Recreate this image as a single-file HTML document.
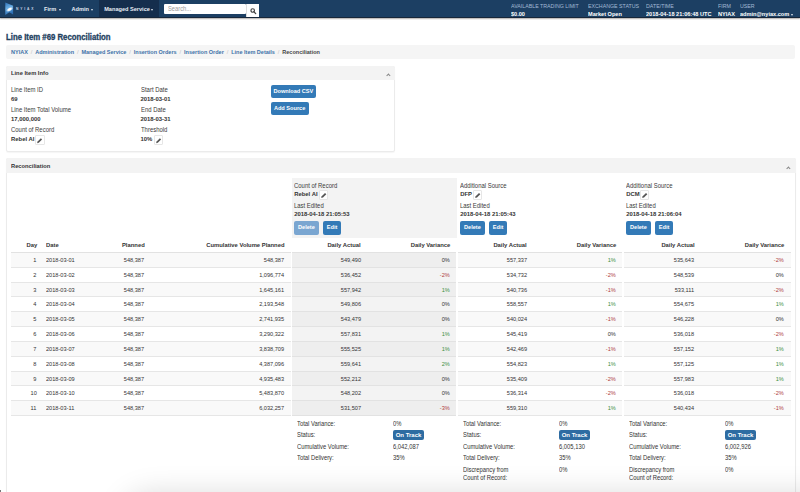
<!DOCTYPE html>
<html><head><meta charset="utf-8">
<style>
*{box-sizing:border-box;margin:0;padding:0}
html,body{width:800px;height:492px;overflow:hidden;background:#fff}
.wrap{position:absolute;left:0;top:0;width:800px;height:492px}
body{font-family:"Liberation Sans",sans-serif;color:#333;position:relative}
.a{position:absolute;white-space:nowrap;line-height:1}
.nav{position:absolute;left:0;top:0;width:800px;height:18px;background:#1c3f63;border-bottom:1px solid #17273a;box-shadow:0 1px 1.2px rgba(40,30,20,.35)}
.nl{color:#e6edf5;font-weight:bold;font-size:5.6px}
.lab{color:#a3bad6;font-size:6px;transform:scaleX(.88);transform-origin:0 0}
.val{color:#fff;font-weight:bold;font-size:6px;transform:scaleX(.93);transform-origin:0 0}
.title{color:#23415f;font-weight:bold;font-size:8.2px;transform:scaleX(0.95);transform-origin:0 0;-webkit-text-stroke:0.3px #23415f}
.bc{position:absolute;left:6px;top:45px;width:789px;height:14px;background:#f5f5f5;border-radius:2px}
.bcl{color:#3d72a8;font-size:5.5px;font-weight:bold}
.bcs{color:#c4c4c4;font-size:5.9px;padding:0 2.9px}
.panel{position:absolute;border:1px solid #ebebeb;border-radius:2px;background:#fff;box-shadow:0 1px 1px rgba(0,0,0,.04)}
.ph{position:absolute;left:-1px;top:-1px;right:-1px;background:#f3f3f3;border-radius:2px 2px 0 0}
.pht{color:#333;font-weight:bold;font-size:6.2px;transform:scaleX(.93);transform-origin:0 0}
.l{color:#3a3a3a;font-size:6.6px;transform:scaleX(.9);transform-origin:0 0}
.v{color:#333;font-weight:bold;font-size:5.9px}
.pen{position:absolute;width:9.3px;height:10.1px;border:0.6px solid #e6e6e6;border-radius:1px;background:#fff}
.btn{position:absolute;background:#337ab7;border-radius:2px;color:#fff;font-weight:bold;font-size:5.6px;text-align:center}
.th{font-weight:bold;font-size:6.1px;color:#333;transform:scaleX(.96);transform-origin:0 0}
.td{font-size:6.1px;color:#333;transform:scaleX(.92);transform-origin:0 0}
.pencil{position:absolute}
.sl{font-size:6.6px;color:#333;transform:scaleX(.885);transform-origin:0 0}
.caret{position:absolute;width:0;height:0;border-left:1.6px solid transparent;border-right:1.6px solid transparent;border-top:2px solid #dfe7f0}
.chev{position:absolute;width:2.8px;height:2.8px;border-left:0.9px solid #888;border-top:0.9px solid #888;transform:rotate(45deg)}
</style></head><body><div class="wrap">
<div class="nav"></div>
<!-- logo -->
<svg class="a" style="left:5px;top:1.5px" width="9" height="13" viewBox="0 0 9 13">
<defs><linearGradient id="lg" x1="0" y1="0" x2="0.3" y2="1"><stop offset="0" stop-color="#2f72b8"/><stop offset="0.5" stop-color="#6aaee3"/><stop offset="1" stop-color="#2c6db3"/></linearGradient>
<radialGradient id="rg"><stop offset="0.4" stop-color="#fff"/><stop offset="1" stop-color="#fff" stop-opacity="0"/></radialGradient></defs>
<path d="M0.3 0.5 L8.1 3.7 L8.1 12.6 L4.4 10.2 L0.3 13 Z" fill="url(#lg)"/>
<ellipse cx="4.6" cy="7.4" rx="3.9" ry="2" transform="rotate(-28 4.6 7.4)" fill="url(#rg)"/>
</svg>
<div class="a" style="left:16px;top:7.9px;color:#c9d5e3;font-size:3.3px;font-weight:bold;letter-spacing:1.85px">NYIAX</div>
<div class="a" style="left:98.7px;top:0;width:60.2px;height:17px;background:#152e4d"></div>
<div class="a nl" style="left:44px;top:7px">Firm</div><div class="caret" style="left:58.8px;top:9.2px"></div>
<div class="a nl" style="left:71.5px;top:7px">Admin</div><div class="caret" style="left:91px;top:9.2px"></div>
<div class="a nl" style="left:104.2px;top:7px">Managed Service</div><div class="caret" style="left:150.9px;top:9.2px"></div>
<div class="a" style="left:164px;top:4px;width:82px;height:10px;background:#fff;border-radius:1px"></div>
<div class="a" style="left:168px;top:5.9px;color:#9a9a9a;font-size:6.4px;transform:scaleX(.9);transform-origin:0 0">Search...</div>
<div class="a" style="left:245.5px;top:4px;width:13.5px;height:12.6px;background:#fff;border-left:1px solid #ddd"></div>
<svg class="a" style="left:249.5px;top:7.5px" width="7" height="7" viewBox="0 0 7 7"><circle cx="2.7" cy="2.5" r="1.75" fill="none" stroke="#444" stroke-width="1.2"/><path d="M3.9 3.8 L5.7 5.6" stroke="#444" stroke-width="1.3" stroke-linecap="round"/></svg>

<div class="a lab" style="left:511.3px;top:3.1px">AVAILABLE TRADING LIMIT</div>
<div class="a val" style="left:511.3px;top:10.9px">$0.00</div>
<div class="a lab" style="left:588px;top:3.1px">EXCHANGE STATUS</div>
<div class="a val" style="left:588px;top:10.9px">Market Open</div>
<div class="a lab" style="left:646px;top:3.1px">DATE/TIME</div>
<div class="a val" style="left:646px;top:10.9px">2018-04-18 21:06:48 UTC</div>
<div class="a lab" style="left:717.5px;top:3.1px">FIRM</div>
<div class="a val" style="left:717.5px;top:10.9px">NYIAX</div>
<div class="a lab" style="left:740px;top:3.1px">USER</div>
<div class="a val" style="left:740px;top:10.9px">admin@nyiax.com</div><div class="caret" style="left:791px;top:13.6px"></div>

<div class="a title" style="left:5.6px;top:34px">Line Item #69 Reconciliation</div>
<div class="bc"></div>
<div class="a" style="left:11px;top:49.6px;font-size:5.9px"><span class="bcl">NYIAX</span><span class="bcs">/</span><span class="bcl">Administration</span><span class="bcs">/</span><span class="bcl">Managed Service</span><span class="bcs">/</span><span class="bcl">Insertion Orders</span><span class="bcs">/</span><span class="bcl">Insertion Order</span><span class="bcs">/</span><span class="bcl">Line Item Details</span><span class="bcs">/</span><span class="bcl" style="color:#444">Reconciliation</span></div>

<!-- panel 1 -->
<div class="panel" style="left:5.5px;top:66.2px;width:389.5px;height:86.3px">
  <div class="ph" style="height:14.2px"></div>
</div>
<div class="a pht" style="left:11px;top:70.1px">Line Item Info</div>
<div class="chev" style="left:386.6px;top:73.8px"></div>

<div class="a l" style="left:11px;top:87.2px">Line Item ID</div>
<div class="a v" style="left:11px;top:97px">69</div>
<div class="a l" style="left:11px;top:107.1px">Line Item Total Volume</div>
<div class="a v" style="left:11px;top:117px">17,000,000</div>
<div class="a l" style="left:11px;top:127.2px">Count of Record</div>
<div class="a v" style="left:11px;top:137px">Rebel AI</div>
<div class="pen" style="left:35.3px;top:134.5px"><svg width="9" height="10" viewBox="0 0 9 10" style="position:absolute;left:-1px;top:-1px"><path d="M2.1 8.3 L2.6 6.5 L5.9 3.2 L7.1 4.4 L3.8 7.7 Z" fill="#555"/></svg></div>

<div class="a l" style="left:140.5px;top:87.2px">Start Date</div>
<div class="a v" style="left:140.5px;top:97px">2018-03-01</div>
<div class="a l" style="left:140.5px;top:107.1px">End Date</div>
<div class="a v" style="left:140.5px;top:117px">2018-03-31</div>
<div class="a l" style="left:140.5px;top:127.2px">Threshold</div>
<div class="a v" style="left:140.5px;top:137px">10%</div>
<div class="pen" style="left:154px;top:134.5px"><svg width="9" height="10" viewBox="0 0 9 10" style="position:absolute;left:-1px;top:-1px"><path d="M2.1 8.3 L2.6 6.5 L5.9 3.2 L7.1 4.4 L3.8 7.7 Z" fill="#555"/></svg></div>

<div class="btn" style="left:270.6px;top:85.1px;width:45.6px;height:13.4px;line-height:13.4px">Download CSV</div>
<div class="btn" style="left:270.6px;top:102px;width:38px;height:13.4px;line-height:13.4px">Add Source</div>

<!-- panel 2 -->
<div class="panel" style="left:5.5px;top:158px;width:790px;height:340px">
  <div class="ph" style="height:15px"></div>
</div>
<div class="a pht" style="left:11px;top:163.1px">Reconciliation</div>
<div class="chev" style="left:786.6px;top:166.6px"></div>
<div class="a" style="left:0;top:490px;width:1px;height:2px;background:#777"></div>

<div class="a" style="left:11.25px;top:252.2px;width:279.55px;height:1.5px;background:#e2e2e2"></div>
<div class="a" style="left:292px;top:252.2px;width:164.2px;height:1.5px;background:#e2e2e2"></div>
<div class="a" style="left:458px;top:252.2px;width:164.20000000000005px;height:1.5px;background:#e2e2e2"></div>
<div class="a" style="left:624px;top:252.2px;width:166.5px;height:1.5px;background:#e2e2e2"></div>
<div class="a" style="left:11.25px;top:253.0px;width:279.55px;height:14.83px;background:#f9f9f9;border-bottom:1px solid #e6e6e6"></div>
<div class="a" style="left:292px;top:253.0px;width:164.2px;height:14.83px;background:#eeeeee;border-bottom:1px solid #e2e2e2"></div>
<div class="a" style="left:458px;top:253.0px;width:164.20000000000005px;height:14.83px;background:#f9f9f9;border-bottom:1px solid #e6e6e6"></div>
<div class="a" style="left:624px;top:253.0px;width:166.5px;height:14.83px;background:#f9f9f9;border-bottom:1px solid #e6e6e6"></div>
<div class="a" style="left:11.25px;top:267.83px;width:279.55px;height:14.83px;background:#ffffff;border-bottom:1px solid #e6e6e6"></div>
<div class="a" style="left:292px;top:267.83px;width:164.2px;height:14.83px;background:#f3f3f3;border-bottom:1px solid #e2e2e2"></div>
<div class="a" style="left:458px;top:267.83px;width:164.20000000000005px;height:14.83px;background:#ffffff;border-bottom:1px solid #e6e6e6"></div>
<div class="a" style="left:624px;top:267.83px;width:166.5px;height:14.83px;background:#ffffff;border-bottom:1px solid #e6e6e6"></div>
<div class="a" style="left:11.25px;top:282.66px;width:279.55px;height:14.83px;background:#f9f9f9;border-bottom:1px solid #e6e6e6"></div>
<div class="a" style="left:292px;top:282.66px;width:164.2px;height:14.83px;background:#eeeeee;border-bottom:1px solid #e2e2e2"></div>
<div class="a" style="left:458px;top:282.66px;width:164.20000000000005px;height:14.83px;background:#f9f9f9;border-bottom:1px solid #e6e6e6"></div>
<div class="a" style="left:624px;top:282.66px;width:166.5px;height:14.83px;background:#f9f9f9;border-bottom:1px solid #e6e6e6"></div>
<div class="a" style="left:11.25px;top:297.49px;width:279.55px;height:14.83px;background:#ffffff;border-bottom:1px solid #e6e6e6"></div>
<div class="a" style="left:292px;top:297.49px;width:164.2px;height:14.83px;background:#f3f3f3;border-bottom:1px solid #e2e2e2"></div>
<div class="a" style="left:458px;top:297.49px;width:164.20000000000005px;height:14.83px;background:#ffffff;border-bottom:1px solid #e6e6e6"></div>
<div class="a" style="left:624px;top:297.49px;width:166.5px;height:14.83px;background:#ffffff;border-bottom:1px solid #e6e6e6"></div>
<div class="a" style="left:11.25px;top:312.32px;width:279.55px;height:14.83px;background:#f9f9f9;border-bottom:1px solid #e6e6e6"></div>
<div class="a" style="left:292px;top:312.32px;width:164.2px;height:14.83px;background:#eeeeee;border-bottom:1px solid #e2e2e2"></div>
<div class="a" style="left:458px;top:312.32px;width:164.20000000000005px;height:14.83px;background:#f9f9f9;border-bottom:1px solid #e6e6e6"></div>
<div class="a" style="left:624px;top:312.32px;width:166.5px;height:14.83px;background:#f9f9f9;border-bottom:1px solid #e6e6e6"></div>
<div class="a" style="left:11.25px;top:327.15px;width:279.55px;height:14.83px;background:#ffffff;border-bottom:1px solid #e6e6e6"></div>
<div class="a" style="left:292px;top:327.15px;width:164.2px;height:14.83px;background:#f3f3f3;border-bottom:1px solid #e2e2e2"></div>
<div class="a" style="left:458px;top:327.15px;width:164.20000000000005px;height:14.83px;background:#ffffff;border-bottom:1px solid #e6e6e6"></div>
<div class="a" style="left:624px;top:327.15px;width:166.5px;height:14.83px;background:#ffffff;border-bottom:1px solid #e6e6e6"></div>
<div class="a" style="left:11.25px;top:341.98px;width:279.55px;height:14.83px;background:#f9f9f9;border-bottom:1px solid #e6e6e6"></div>
<div class="a" style="left:292px;top:341.98px;width:164.2px;height:14.83px;background:#eeeeee;border-bottom:1px solid #e2e2e2"></div>
<div class="a" style="left:458px;top:341.98px;width:164.20000000000005px;height:14.83px;background:#f9f9f9;border-bottom:1px solid #e6e6e6"></div>
<div class="a" style="left:624px;top:341.98px;width:166.5px;height:14.83px;background:#f9f9f9;border-bottom:1px solid #e6e6e6"></div>
<div class="a" style="left:11.25px;top:356.81px;width:279.55px;height:14.83px;background:#ffffff;border-bottom:1px solid #e6e6e6"></div>
<div class="a" style="left:292px;top:356.81px;width:164.2px;height:14.83px;background:#f3f3f3;border-bottom:1px solid #e2e2e2"></div>
<div class="a" style="left:458px;top:356.81px;width:164.20000000000005px;height:14.83px;background:#ffffff;border-bottom:1px solid #e6e6e6"></div>
<div class="a" style="left:624px;top:356.81px;width:166.5px;height:14.83px;background:#ffffff;border-bottom:1px solid #e6e6e6"></div>
<div class="a" style="left:11.25px;top:371.64px;width:279.55px;height:14.83px;background:#f9f9f9;border-bottom:1px solid #e6e6e6"></div>
<div class="a" style="left:292px;top:371.64px;width:164.2px;height:14.83px;background:#eeeeee;border-bottom:1px solid #e2e2e2"></div>
<div class="a" style="left:458px;top:371.64px;width:164.20000000000005px;height:14.83px;background:#f9f9f9;border-bottom:1px solid #e6e6e6"></div>
<div class="a" style="left:624px;top:371.64px;width:166.5px;height:14.83px;background:#f9f9f9;border-bottom:1px solid #e6e6e6"></div>
<div class="a" style="left:11.25px;top:386.47px;width:279.55px;height:14.83px;background:#ffffff;border-bottom:1px solid #e6e6e6"></div>
<div class="a" style="left:292px;top:386.47px;width:164.2px;height:14.83px;background:#f3f3f3;border-bottom:1px solid #e2e2e2"></div>
<div class="a" style="left:458px;top:386.47px;width:164.20000000000005px;height:14.83px;background:#ffffff;border-bottom:1px solid #e6e6e6"></div>
<div class="a" style="left:624px;top:386.47px;width:166.5px;height:14.83px;background:#ffffff;border-bottom:1px solid #e6e6e6"></div>
<div class="a" style="left:11.25px;top:401.3px;width:279.55px;height:14.83px;background:#f9f9f9;border-bottom:1px solid #e6e6e6"></div>
<div class="a" style="left:292px;top:401.3px;width:164.2px;height:14.83px;background:#eeeeee;border-bottom:1px solid #e2e2e2"></div>
<div class="a" style="left:458px;top:401.3px;width:164.20000000000005px;height:14.83px;background:#f9f9f9;border-bottom:1px solid #e6e6e6"></div>
<div class="a" style="left:624px;top:401.3px;width:166.5px;height:14.83px;background:#f9f9f9;border-bottom:1px solid #e6e6e6"></div>
<div class="a th" style="right:763.2px;top:242.2px;transform-origin:100% 0;">Day</div>
<div class="a th" style="left:46px;top:242.2px;">Date</div>
<div class="a th" style="right:655.8px;top:242.2px;transform-origin:100% 0;">Planned</div>
<div class="a th" style="right:515.8px;top:242.2px;transform-origin:100% 0;">Cumulative Volume Planned</div>
<div class="a th" style="right:439px;top:242.2px;transform-origin:100% 0;">Daily Actual</div>
<div class="a th" style="right:350px;top:242.2px;transform-origin:100% 0;">Daily Variance</div>
<div class="a th" style="right:273.4px;top:242.2px;transform-origin:100% 0;">Daily Actual</div>
<div class="a th" style="right:184px;top:242.2px;transform-origin:100% 0;">Daily Variance</div>
<div class="a th" style="right:105.70000000000005px;top:242.2px;transform-origin:100% 0;">Daily Actual</div>
<div class="a th" style="right:16px;top:242.2px;transform-origin:100% 0;">Daily Variance</div>
<div class="a td" style="right:763.2px;top:257.0px;transform-origin:100% 0;">1</div>
<div class="a td" style="left:46px;top:257.0px;">2018-03-01</div>
<div class="a td" style="right:655.8px;top:257.0px;transform-origin:100% 0;">548,387</div>
<div class="a td" style="right:515.8px;top:257.0px;transform-origin:100% 0;">548,387</div>
<div class="a td" style="right:439px;top:257.0px;transform-origin:100% 0;">549,490</div>
<div class="a td" style="right:350px;top:257.0px;transform-origin:100% 0;">0%</div>
<div class="a td" style="right:273.4px;top:257.0px;transform-origin:100% 0;">557,337</div>
<div class="a td" style="right:184px;top:257.0px;transform-origin:100% 0;color:#3f8f3f">1%</div>
<div class="a td" style="right:105.70000000000005px;top:257.0px;transform-origin:100% 0;">535,643</div>
<div class="a td" style="right:16px;top:257.0px;transform-origin:100% 0;color:#b0413e">-2%</div>
<div class="a td" style="right:763.2px;top:271.83px;transform-origin:100% 0;">2</div>
<div class="a td" style="left:46px;top:271.83px;">2018-03-02</div>
<div class="a td" style="right:655.8px;top:271.83px;transform-origin:100% 0;">548,387</div>
<div class="a td" style="right:515.8px;top:271.83px;transform-origin:100% 0;">1,096,774</div>
<div class="a td" style="right:439px;top:271.83px;transform-origin:100% 0;">536,452</div>
<div class="a td" style="right:350px;top:271.83px;transform-origin:100% 0;color:#b0413e">-2%</div>
<div class="a td" style="right:273.4px;top:271.83px;transform-origin:100% 0;">534,732</div>
<div class="a td" style="right:184px;top:271.83px;transform-origin:100% 0;color:#b0413e">-2%</div>
<div class="a td" style="right:105.70000000000005px;top:271.83px;transform-origin:100% 0;">548,539</div>
<div class="a td" style="right:16px;top:271.83px;transform-origin:100% 0;">0%</div>
<div class="a td" style="right:763.2px;top:286.66px;transform-origin:100% 0;">3</div>
<div class="a td" style="left:46px;top:286.66px;">2018-03-03</div>
<div class="a td" style="right:655.8px;top:286.66px;transform-origin:100% 0;">548,387</div>
<div class="a td" style="right:515.8px;top:286.66px;transform-origin:100% 0;">1,645,161</div>
<div class="a td" style="right:439px;top:286.66px;transform-origin:100% 0;">557,942</div>
<div class="a td" style="right:350px;top:286.66px;transform-origin:100% 0;color:#3f8f3f">1%</div>
<div class="a td" style="right:273.4px;top:286.66px;transform-origin:100% 0;">540,736</div>
<div class="a td" style="right:184px;top:286.66px;transform-origin:100% 0;color:#b0413e">-1%</div>
<div class="a td" style="right:105.70000000000005px;top:286.66px;transform-origin:100% 0;">533,111</div>
<div class="a td" style="right:16px;top:286.66px;transform-origin:100% 0;color:#b0413e">-2%</div>
<div class="a td" style="right:763.2px;top:301.49px;transform-origin:100% 0;">4</div>
<div class="a td" style="left:46px;top:301.49px;">2018-03-04</div>
<div class="a td" style="right:655.8px;top:301.49px;transform-origin:100% 0;">548,387</div>
<div class="a td" style="right:515.8px;top:301.49px;transform-origin:100% 0;">2,193,548</div>
<div class="a td" style="right:439px;top:301.49px;transform-origin:100% 0;">549,806</div>
<div class="a td" style="right:350px;top:301.49px;transform-origin:100% 0;">0%</div>
<div class="a td" style="right:273.4px;top:301.49px;transform-origin:100% 0;">558,557</div>
<div class="a td" style="right:184px;top:301.49px;transform-origin:100% 0;color:#3f8f3f">1%</div>
<div class="a td" style="right:105.70000000000005px;top:301.49px;transform-origin:100% 0;">554,675</div>
<div class="a td" style="right:16px;top:301.49px;transform-origin:100% 0;color:#3f8f3f">1%</div>
<div class="a td" style="right:763.2px;top:316.32px;transform-origin:100% 0;">5</div>
<div class="a td" style="left:46px;top:316.32px;">2018-03-05</div>
<div class="a td" style="right:655.8px;top:316.32px;transform-origin:100% 0;">548,387</div>
<div class="a td" style="right:515.8px;top:316.32px;transform-origin:100% 0;">2,741,935</div>
<div class="a td" style="right:439px;top:316.32px;transform-origin:100% 0;">543,479</div>
<div class="a td" style="right:350px;top:316.32px;transform-origin:100% 0;">0%</div>
<div class="a td" style="right:273.4px;top:316.32px;transform-origin:100% 0;">540,024</div>
<div class="a td" style="right:184px;top:316.32px;transform-origin:100% 0;color:#b0413e">-1%</div>
<div class="a td" style="right:105.70000000000005px;top:316.32px;transform-origin:100% 0;">546,228</div>
<div class="a td" style="right:16px;top:316.32px;transform-origin:100% 0;">0%</div>
<div class="a td" style="right:763.2px;top:331.15px;transform-origin:100% 0;">6</div>
<div class="a td" style="left:46px;top:331.15px;">2018-03-06</div>
<div class="a td" style="right:655.8px;top:331.15px;transform-origin:100% 0;">548,387</div>
<div class="a td" style="right:515.8px;top:331.15px;transform-origin:100% 0;">3,290,322</div>
<div class="a td" style="right:439px;top:331.15px;transform-origin:100% 0;">557,831</div>
<div class="a td" style="right:350px;top:331.15px;transform-origin:100% 0;color:#3f8f3f">1%</div>
<div class="a td" style="right:273.4px;top:331.15px;transform-origin:100% 0;">545,419</div>
<div class="a td" style="right:184px;top:331.15px;transform-origin:100% 0;">0%</div>
<div class="a td" style="right:105.70000000000005px;top:331.15px;transform-origin:100% 0;">536,018</div>
<div class="a td" style="right:16px;top:331.15px;transform-origin:100% 0;color:#b0413e">-2%</div>
<div class="a td" style="right:763.2px;top:345.98px;transform-origin:100% 0;">7</div>
<div class="a td" style="left:46px;top:345.98px;">2018-03-07</div>
<div class="a td" style="right:655.8px;top:345.98px;transform-origin:100% 0;">548,387</div>
<div class="a td" style="right:515.8px;top:345.98px;transform-origin:100% 0;">3,838,709</div>
<div class="a td" style="right:439px;top:345.98px;transform-origin:100% 0;">555,525</div>
<div class="a td" style="right:350px;top:345.98px;transform-origin:100% 0;color:#3f8f3f">1%</div>
<div class="a td" style="right:273.4px;top:345.98px;transform-origin:100% 0;">542,469</div>
<div class="a td" style="right:184px;top:345.98px;transform-origin:100% 0;color:#b0413e">-1%</div>
<div class="a td" style="right:105.70000000000005px;top:345.98px;transform-origin:100% 0;">557,152</div>
<div class="a td" style="right:16px;top:345.98px;transform-origin:100% 0;color:#3f8f3f">1%</div>
<div class="a td" style="right:763.2px;top:360.81px;transform-origin:100% 0;">8</div>
<div class="a td" style="left:46px;top:360.81px;">2018-03-08</div>
<div class="a td" style="right:655.8px;top:360.81px;transform-origin:100% 0;">548,387</div>
<div class="a td" style="right:515.8px;top:360.81px;transform-origin:100% 0;">4,387,096</div>
<div class="a td" style="right:439px;top:360.81px;transform-origin:100% 0;">559,641</div>
<div class="a td" style="right:350px;top:360.81px;transform-origin:100% 0;color:#3f8f3f">2%</div>
<div class="a td" style="right:273.4px;top:360.81px;transform-origin:100% 0;">554,823</div>
<div class="a td" style="right:184px;top:360.81px;transform-origin:100% 0;color:#3f8f3f">1%</div>
<div class="a td" style="right:105.70000000000005px;top:360.81px;transform-origin:100% 0;">557,125</div>
<div class="a td" style="right:16px;top:360.81px;transform-origin:100% 0;color:#3f8f3f">1%</div>
<div class="a td" style="right:763.2px;top:375.64px;transform-origin:100% 0;">9</div>
<div class="a td" style="left:46px;top:375.64px;">2018-03-09</div>
<div class="a td" style="right:655.8px;top:375.64px;transform-origin:100% 0;">548,387</div>
<div class="a td" style="right:515.8px;top:375.64px;transform-origin:100% 0;">4,935,483</div>
<div class="a td" style="right:439px;top:375.64px;transform-origin:100% 0;">552,212</div>
<div class="a td" style="right:350px;top:375.64px;transform-origin:100% 0;">0%</div>
<div class="a td" style="right:273.4px;top:375.64px;transform-origin:100% 0;">535,409</div>
<div class="a td" style="right:184px;top:375.64px;transform-origin:100% 0;color:#b0413e">-2%</div>
<div class="a td" style="right:105.70000000000005px;top:375.64px;transform-origin:100% 0;">557,983</div>
<div class="a td" style="right:16px;top:375.64px;transform-origin:100% 0;color:#3f8f3f">1%</div>
<div class="a td" style="right:763.2px;top:390.47px;transform-origin:100% 0;">10</div>
<div class="a td" style="left:46px;top:390.47px;">2018-03-10</div>
<div class="a td" style="right:655.8px;top:390.47px;transform-origin:100% 0;">548,387</div>
<div class="a td" style="right:515.8px;top:390.47px;transform-origin:100% 0;">5,483,870</div>
<div class="a td" style="right:439px;top:390.47px;transform-origin:100% 0;">548,202</div>
<div class="a td" style="right:350px;top:390.47px;transform-origin:100% 0;">0%</div>
<div class="a td" style="right:273.4px;top:390.47px;transform-origin:100% 0;">536,314</div>
<div class="a td" style="right:184px;top:390.47px;transform-origin:100% 0;color:#b0413e">-2%</div>
<div class="a td" style="right:105.70000000000005px;top:390.47px;transform-origin:100% 0;">536,018</div>
<div class="a td" style="right:16px;top:390.47px;transform-origin:100% 0;color:#b0413e">-2%</div>
<div class="a td" style="right:763.2px;top:405.3px;transform-origin:100% 0;">11</div>
<div class="a td" style="left:46px;top:405.3px;">2018-03-11</div>
<div class="a td" style="right:655.8px;top:405.3px;transform-origin:100% 0;">548,387</div>
<div class="a td" style="right:515.8px;top:405.3px;transform-origin:100% 0;">6,032,257</div>
<div class="a td" style="right:439px;top:405.3px;transform-origin:100% 0;">531,507</div>
<div class="a td" style="right:350px;top:405.3px;transform-origin:100% 0;color:#b0413e">-3%</div>
<div class="a td" style="right:273.4px;top:405.3px;transform-origin:100% 0;">559,310</div>
<div class="a td" style="right:184px;top:405.3px;transform-origin:100% 0;color:#3f8f3f">1%</div>
<div class="a td" style="right:105.70000000000005px;top:405.3px;transform-origin:100% 0;">540,434</div>
<div class="a td" style="right:16px;top:405.3px;transform-origin:100% 0;color:#b0413e">-1%</div>
<!-- source headers -->
<div class="a" style="left:292px;top:177.6px;width:165px;height:60.2px;background:#f3f3f3"></div>
<div class="a l" style="left:294.2px;top:182.5px">Count of Record</div>
<div class="a v" style="left:294.2px;top:192px">Rebel AI</div>
<div class="a" style="left:318.9px;top:190.3px;width:9.2px;height:10.1px;background:#fff;border:0.6px solid #e6e6e6;border-radius:1px"></div>
<svg class="a" style="left:318.9px;top:190.3px" width="9" height="10" viewBox="0 0 9 10"><path d="M2.2 8.1 L2.7 6.3 L6.0 3.0 L7.3 4.3 L4.0 7.6 Z" fill="#555"/></svg>
<div class="a l" style="left:294.2px;top:203.1px">Last Edited</div>
<div class="a v" style="left:294.2px;top:212px">2018-04-18 21:05:53</div>
<div class="btn" style="left:294px;top:221.4px;width:24.8px;height:13.4px;line-height:13.6px;background:#7aa6d1">Delete</div>
<div class="btn" style="left:323px;top:221.4px;width:18.2px;height:13.4px;line-height:13.6px">Edit</div>
<div class="a sl" style="left:297px;top:421.22px">Total Variance:</div>
<div class="a sl" style="left:393px;top:421.22px">0%</div>
<div class="a sl" style="left:297px;top:432.42px">Status:</div>
<div class="a sl" style="left:297px;top:443.82000000000005px">Cumulative Volume:</div>
<div class="a sl" style="left:393px;top:443.82000000000005px">6,042,087</div>
<div class="a sl" style="left:297px;top:455.02000000000004px">Total Delivery:</div>
<div class="a sl" style="left:393px;top:455.02000000000004px">35%</div>
<div class="btn" style="left:393px;top:429.5px;width:31px;height:10.6px;line-height:11.3px;font-size:6px;background:#2e6ca2">On Track</div>
<div class="a l" style="left:460.2px;top:182.5px">Additional Source</div>
<div class="a v" style="left:460.2px;top:192px">DFP</div>
<div class="a" style="left:472.9px;top:190.3px;width:9.2px;height:10.1px;background:#fff;border:0.6px solid #e6e6e6;border-radius:1px"></div>
<svg class="a" style="left:472.9px;top:190.3px" width="9" height="10" viewBox="0 0 9 10"><path d="M2.2 8.1 L2.7 6.3 L6.0 3.0 L7.3 4.3 L4.0 7.6 Z" fill="#555"/></svg>
<div class="a l" style="left:460.2px;top:203.1px">Last Edited</div>
<div class="a v" style="left:460.2px;top:212px">2018-04-18 21:05:43</div>
<div class="btn" style="left:460px;top:221.4px;width:24.8px;height:13.4px;line-height:13.6px;background:#337ab7">Delete</div>
<div class="btn" style="left:489px;top:221.4px;width:18.2px;height:13.4px;line-height:13.6px">Edit</div>
<div class="a sl" style="left:463px;top:421.22px">Total Variance:</div>
<div class="a sl" style="left:559px;top:421.22px">0%</div>
<div class="a sl" style="left:463px;top:432.42px">Status:</div>
<div class="a sl" style="left:463px;top:443.82000000000005px">Cumulative Volume:</div>
<div class="a sl" style="left:559px;top:443.82000000000005px">6,005,130</div>
<div class="a sl" style="left:463px;top:455.02000000000004px">Total Delivery:</div>
<div class="a sl" style="left:559px;top:455.02000000000004px">35%</div>
<div class="btn" style="left:559px;top:429.5px;width:31px;height:10.6px;line-height:11.3px;font-size:6px;background:#2e6ca2">On Track</div>
<div class="a sl" style="left:463px;top:465.9px;line-height:8.1px">Discrepancy from<br>Count of Record:</div>
<div class="a sl" style="left:559px;top:466.6px">0%</div>
<div class="a l" style="left:626.2px;top:182.5px">Additional Source</div>
<div class="a v" style="left:626.2px;top:192px">DCM</div>
<div class="a" style="left:640.3px;top:190.3px;width:9.2px;height:10.1px;background:#fff;border:0.6px solid #e6e6e6;border-radius:1px"></div>
<svg class="a" style="left:640.3px;top:190.3px" width="9" height="10" viewBox="0 0 9 10"><path d="M2.2 8.1 L2.7 6.3 L6.0 3.0 L7.3 4.3 L4.0 7.6 Z" fill="#555"/></svg>
<div class="a l" style="left:626.2px;top:203.1px">Last Edited</div>
<div class="a v" style="left:626.2px;top:212px">2018-04-18 21:06:04</div>
<div class="btn" style="left:626px;top:221.4px;width:24.8px;height:13.4px;line-height:13.6px;background:#337ab7">Delete</div>
<div class="btn" style="left:655px;top:221.4px;width:18.2px;height:13.4px;line-height:13.6px">Edit</div>
<div class="a sl" style="left:629px;top:421.22px">Total Variance:</div>
<div class="a sl" style="left:725px;top:421.22px">0%</div>
<div class="a sl" style="left:629px;top:432.42px">Status:</div>
<div class="a sl" style="left:629px;top:443.82000000000005px">Cumulative Volume:</div>
<div class="a sl" style="left:725px;top:443.82000000000005px">6,002,926</div>
<div class="a sl" style="left:629px;top:455.02000000000004px">Total Delivery:</div>
<div class="a sl" style="left:725px;top:455.02000000000004px">35%</div>
<div class="btn" style="left:725px;top:429.5px;width:31px;height:10.6px;line-height:11.3px;font-size:6px;background:#2e6ca2">On Track</div>
<div class="a sl" style="left:629px;top:465.9px;line-height:8.1px">Discrepancy from<br>Count of Record:</div>
<div class="a sl" style="left:725px;top:466.6px">0%</div>
<!-- bottom shadow -->
<div class="a" style="left:128px;top:500px;width:1000px;height:60px;border-radius:24px;box-shadow:0 0 30px 6px rgba(0,0,0,0.15)"></div>

</div></body></html>
